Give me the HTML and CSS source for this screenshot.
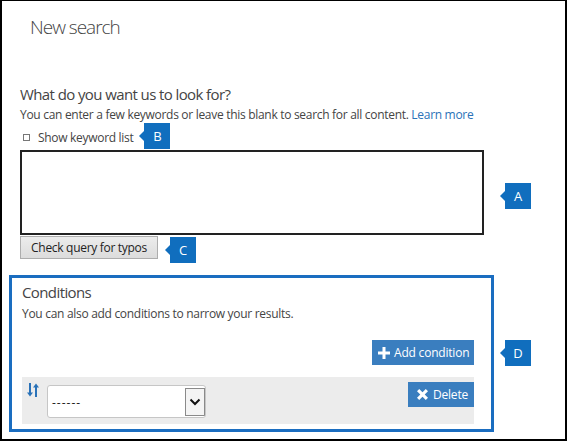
FILE: index.html
```html
<!DOCTYPE html>
<html>
<head>
<meta charset="utf-8">
<link rel="stylesheet" href="styles.css">
</head>
<body>
<div class="frame">
  <h1 class="title">New search</h1>
  <section class="query">
    <h2 class="q-title">What do you want us to look for?</h2>
    <p class="q-desc">You can enter a few keywords or leave this blank to search for all content. <a class="link" href="#">Learn more</a></p>
    <div class="kw-row">
      <label class="kw"><span class="box"></span>Show keyword list</label>
      <span class="badge badge-b">B</span>
    </div>
    <div class="ta-row">
      <textarea class="ta"></textarea>
      <span class="badge badge-a">A</span>
    </div>
    <div class="btn-row">
      <button class="check">Check query for typos</button>
      <span class="badge badge-c">C</span>
    </div>
  </section>
  <div class="cond-row">
    <section class="cond">
      <h2 class="c-title">Conditions</h2>
      <p class="c-desc">You can also add conditions to narrow your results.</p>
      <div class="add-wrap">
        <button class="blue-btn add"><svg class="ico" width="12" height="12" viewBox="0 0 12 12"><path d="M4.5 0h3v4.5H12v3H7.5V12h-3V7.5H0v-3h4.5z" fill="#fff"/></svg>Add condition</button>
      </div>
      <div class="cond-item">
        <svg class="sort" width="12" height="14" viewBox="0 0 12 14"><path d="M2 0h2v9.5h2L3 13.5 0 9.5h2z" fill="#2a72b8"/><path d="M8 14h2V4.5h2L9 0.5 6 4.5h2z" fill="#2a72b8"/></svg>
        <div class="select"><span class="sel-text">------</span><span class="sel-arrow"><svg width="12" height="8" viewBox="0 0 12 8"><path d="M1.5 1.5l4.5 4.5 4.5-4.5" fill="none" stroke="#111" stroke-width="2"/></svg></span></div>
        <button class="blue-btn del"><svg class="ico" width="11" height="11" viewBox="0 0 11 11"><path d="M0 2.2L2.2 0 5.5 3.3 8.8 0 11 2.2 7.7 5.5 11 8.8 8.8 11 5.5 7.7 2.2 11 0 8.8 3.3 5.5z" fill="#fff"/></svg>Delete</button>
      </div>
    </section>
    <span class="badge badge-d">D</span>
  </div>
</div>
</body>
</html>
```

FILE: styles.css
```css
* { box-sizing: border-box; }
html, body { margin: 0; padding: 0; background: #fff; }
body { font-family: "Open Sans", "Noto Sans", sans-serif; color: #444; }

.frame {
  width: 567px;
  height: 441px;
  border: 2px solid #000;
  border-top-width: 1px;
  padding-left: 18px;
  overflow: hidden;
}

.title {
  margin: 14px 0 0 10px;
  font-size: 19px;
  line-height: 24px;
  font-weight: 300;
  letter-spacing: -1px;
  color: #444;
}

.q-title {
  margin: 45px 0 0 0;
  font-size: 15px;
  line-height: 20px;
  font-weight: 400;
  letter-spacing: -0.6px;
  color: #444;
}

.q-desc {
  margin: 3px 0 0 0;
  font-size: 12px;
  line-height: 16px;
  letter-spacing: -0.3px;
  color: #444;
  white-space: nowrap;
}
.link { color: #2a72b8; text-decoration: none; }

.kw-row {
  display: flex;
  align-items: center;
  height: 26px;
}
.kw {
  display: flex;
  align-items: center;
  font-size: 12px;
  line-height: 16px;
  letter-spacing: -0.3px;
  margin-top: 3px;
  color: #444;
}
.box {
  width: 7px;
  height: 7px;
  border: 1px solid #777;
  margin: 0 8px 0 3px;
}

.badge {
  position: relative;
  display: flex;
  align-items: center;
  justify-content: center;
  width: 26px;
  height: 26px;
  background: #106ebe;
  color: #fff;
  font-size: 13px;
  font-weight: 400;
  flex: none;
}
.badge::before {
  content: "";
  position: absolute;
  left: -5px;
  top: 8px;
  border-top: 5px solid transparent;
  border-bottom: 5px solid transparent;
  border-right: 5px solid #106ebe;
}
.badge-b { margin-left: 11px; }

.ta-row {
  display: flex;
  align-items: flex-start;
  margin-top: 1px;
}
.ta {
  display: block;
  width: 464px;
  height: 85px;
  border: 2px solid #222;
  resize: none;
  margin: 0;
  padding: 0;
}
.badge-a { margin: 33px 0 0 21px; }

.btn-row {
  display: flex;
  align-items: flex-start;
  margin-top: 1px;
}
.check {
  width: 138px;
  height: 23px;
  margin: 0;
  padding: 0;
  border: 1px solid #adadad;
  background: linear-gradient(#ececec, #dcdcdc);
  font-family: inherit;
  font-size: 12px;
  letter-spacing: -0.3px;
  color: #222;
}
.badge-c { margin: 1px 0 0 12px; }

.cond-row {
  display: flex;
  align-items: flex-start;
  margin: 12px 0 0 -11px;
}
.cond {
  width: 485px;
  height: 157px;
  border: 3px solid #1a6dc0;
  padding: 4px 17px 0 10px;
}
.c-title {
  margin: 0;
  font-size: 15px;
  line-height: 20px;
  font-weight: 400;
  letter-spacing: -0.6px;
  color: #444;
}
.c-desc {
  margin: 4px 0 0 0;
  font-size: 12px;
  line-height: 16px;
  letter-spacing: -0.3px;
  color: #444;
}
.add-wrap {
  display: flex;
  justify-content: flex-end;
  margin-top: 18px;
}
.blue-btn {
  display: flex;
  align-items: center;
  height: 25px;
  margin: 0;
  border: 0;
  background: #3a7ebf;
  color: #fff;
  font-family: inherit;
  font-size: 12px;
  letter-spacing: -0.2px;
}
.add { width: 102px; padding: 0 0 0 6px; }
.add .ico { margin-right: 4px; }
.del { width: 66px; padding: 0 0 0 9px; }
.del .ico { margin-right: 5px; }

.cond-item {
  display: flex;
  align-items: flex-start;
  height: 47px;
  margin-top: 12px;
  background: #ececec;
  padding-left: 5px;
}
.sort { margin-top: 6px; flex: none; }
.select {
  display: flex;
  align-items: stretch;
  width: 159px;
  height: 33px;
  margin: 8px 0 0 8px;
  background: #fff;
  border: 1px solid #c6c6c6;
  border-radius: 3px;
  overflow: hidden;
}
.sel-text {
  flex: 1;
  padding: 8px 0 0 4px;
  font-size: 12px;
  color: #222;
  letter-spacing: 1px;
}
.sel-arrow {
  width: 20px;
  display: flex;
  align-items: center;
  justify-content: center;
  border: 1px solid #8a8a8a;
  background: #f4f4f4;
  margin: 2px 0 1px 0;
}
.del { margin: 5px 0 0 auto; }

.badge-d { margin: 65px 0 0 11px; }
```
